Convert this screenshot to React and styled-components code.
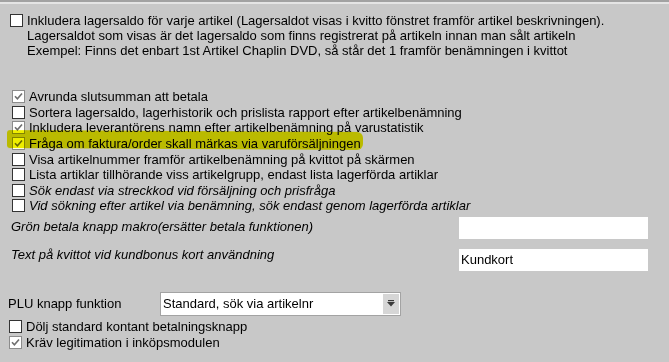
import React from "react";
import styled, { createGlobalStyle } from "styled-components";

const GlobalStyle = createGlobalStyle`
  html, body {
    margin: 0;
    padding: 0;
    background: #c8c8c8;
  }
  body {
    font-family: "Liberation Sans", Arial, sans-serif;
    font-size: 13px;
    color: #000;
  }
`;

const Page = styled.div`
  position: relative;
  width: 669px;
  height: 362px;
  overflow: hidden;
  background: #c8c8c8;
`;

const TopEdge = styled.div`
  height: 2px;
  background: #e4e4e4;
  border-top: 2px solid #a2a2a2;
`;

const Intro = styled.div`
  display: flex;
  align-items: flex-start;
  gap: 4px;
  padding: 9px 0 0 10px;
  line-height: 15px;
  height: 76px;
`;

const IntroText = styled.div`
  white-space: nowrap;
`;

const Options = styled.div`
  display: flex;
  flex-direction: column;
  padding-left: 12px;
`;

const OptionRow = styled.label`
  display: flex;
  align-items: center;
  gap: 4px;
  height: 15.6px;
  white-space: nowrap;
  font-style: ${(p) => (p.$italic ? "italic" : "normal")};
`;

const Box = styled.span`
  flex: none;
  width: 13px;
  height: 13px;
  box-sizing: border-box;
  background: #fff;
  border: 1px solid ${(p) => (p.$checked ? "#8c8c8c" : "#333")};
  display: flex;
  align-items: center;
  justify-content: center;
  margin-top: ${(p) => p.$offset || 0}px;
`;

const Settings = styled.div`
  display: flex;
  flex-direction: column;
  gap: 10px;
  padding: 3px 21px 0 11px;
`;

const SettingRow = styled.div`
  display: flex;
  align-items: flex-start;
  justify-content: space-between;
`;

const SettingLabel = styled.span`
  font-style: italic;
  line-height: 15px;
  margin-top: ${(p) => p.$top}px;
`;

const TextField = styled.div`
  width: 189px;
  height: 22px;
  background: #fff;
  line-height: 22px;
  padding-left: 2px;
  box-sizing: border-box;
`;

const PluRow = styled.div`
  display: flex;
  align-items: center;
  margin-top: 21px;
  padding-left: 8px;
  height: 24px;
`;

const PluLabel = styled.span`
  width: 152px;
`;

const Select = styled.div`
  width: 241px;
  height: 24px;
  box-sizing: border-box;
  border: 1px solid #a3a3a3;
  background: #fff;
  display: flex;
  align-items: stretch;
`;

const SelectText = styled.span`
  flex: 1;
  line-height: 22px;
  padding-left: 2px;
`;

const SelectArrow = styled.span`
  width: 16px;
  margin: 1px 1px 1px 0;
  background: #d6d6d6;
  display: flex;
  align-items: center;
  justify-content: center;
`;

const Bottom = styled.div`
  display: flex;
  flex-direction: column;
  padding: 3px 0 0 9px;
`;

const Highlight = styled.div`
  position: absolute;
  left: 7px;
  top: 131px;
  width: 356px;
  height: 18px;
  background: #eeee00;
  mix-blend-mode: multiply;
  border-radius: 3px 6px 6px 3px;
  transform: skewY(0.3deg);
  filter: blur(0.4px);
  pointer-events: none;
`;

const Check = () => (
  <svg width="9" height="9" viewBox="0 0 9 9">
    <path d="M1 4.2 L3.4 6.8 L8 1.4" fill="none" stroke="#6f6f6f" strokeWidth="1.6" />
  </svg>
);

const Checkbox = ({ checked, offset }) => (
  <Box $checked={checked} $offset={offset}>
    {checked && <Check />}
  </Box>
);

const options = [
  { text: "Avrunda slutsumman att betala", checked: true },
  { text: "Sortera lagersaldo, lagerhistorik och prislista rapport efter artikelbenämning" },
  { text: "Inkludera leverantörens namn efter artikelbenämning på varustatistik", checked: true },
  { text: "Fråga om faktura/order skall märkas via varuförsäljningen", checked: true },
  { text: "Visa artikelnummer framför artikelbenämning på kvittot på skärmen" },
  { text: "Lista artiklar tillhörande viss artikelgrupp, endast lista lagerförda artiklar" },
  { text: "Sök endast via streckkod vid försäljning och prisfråga", italic: true },
  { text: "Vid sökning efter artikel via benämning, sök endast genom lagerförda artiklar", italic: true },
];

export default function App() {
  return (
    <Page>
      <GlobalStyle />
      <TopEdge />
      <Intro>
        <Checkbox offset={0.5} />
        <IntroText>
          Inkludera lagersaldo för varje artikel (Lagersaldot visas i kvitto fönstret framför artikel beskrivningen).
          <br />
          Lagersaldot som visas är det lagersaldo som finns registrerat på artikeln innan man sålt artikeln
          <br />
          Exempel: Finns det enbart 1st Artikel Chaplin DVD, så står det 1 framför benämningen i kvittot
        </IntroText>
      </Intro>
      <Options>
        {options.map((o) => (
          <OptionRow key={o.text} $italic={o.italic}>
            <Checkbox checked={o.checked} />
            {o.text}
          </OptionRow>
        ))}
      </Options>
      <Settings>
        <SettingRow>
          <SettingLabel $top={2.5}>Grön betala knapp makro(ersätter betala funktionen)</SettingLabel>
          <TextField />
        </SettingRow>
        <SettingRow>
          <SettingLabel $top={-1.5}>Text på kvittot vid kundbonus kort användning</SettingLabel>
          <TextField>Kundkort</TextField>
        </SettingRow>
      </Settings>
      <PluRow>
        <PluLabel>PLU knapp funktion</PluLabel>
        <Select>
          <SelectText>Standard, sök via artikelnr</SelectText>
          <SelectArrow>
            <svg width="8" height="7" viewBox="0 0 8 7">
              <rect x="1" y="0" width="6" height="1.2" fill="#3a3a3a" />
              <path d="M0 2 H8 L4 6.5 Z" fill="#3a3a3a" />
            </svg>
          </SelectArrow>
        </Select>
      </PluRow>
      <Bottom>
        <OptionRow>
          <Checkbox />
          Dölj standard kontant betalningsknapp
        </OptionRow>
        <OptionRow>
          <Checkbox checked />
          Kräv legitimation i inköpsmodulen
        </OptionRow>
      </Bottom>
      <Highlight />
    </Page>
  );
}
